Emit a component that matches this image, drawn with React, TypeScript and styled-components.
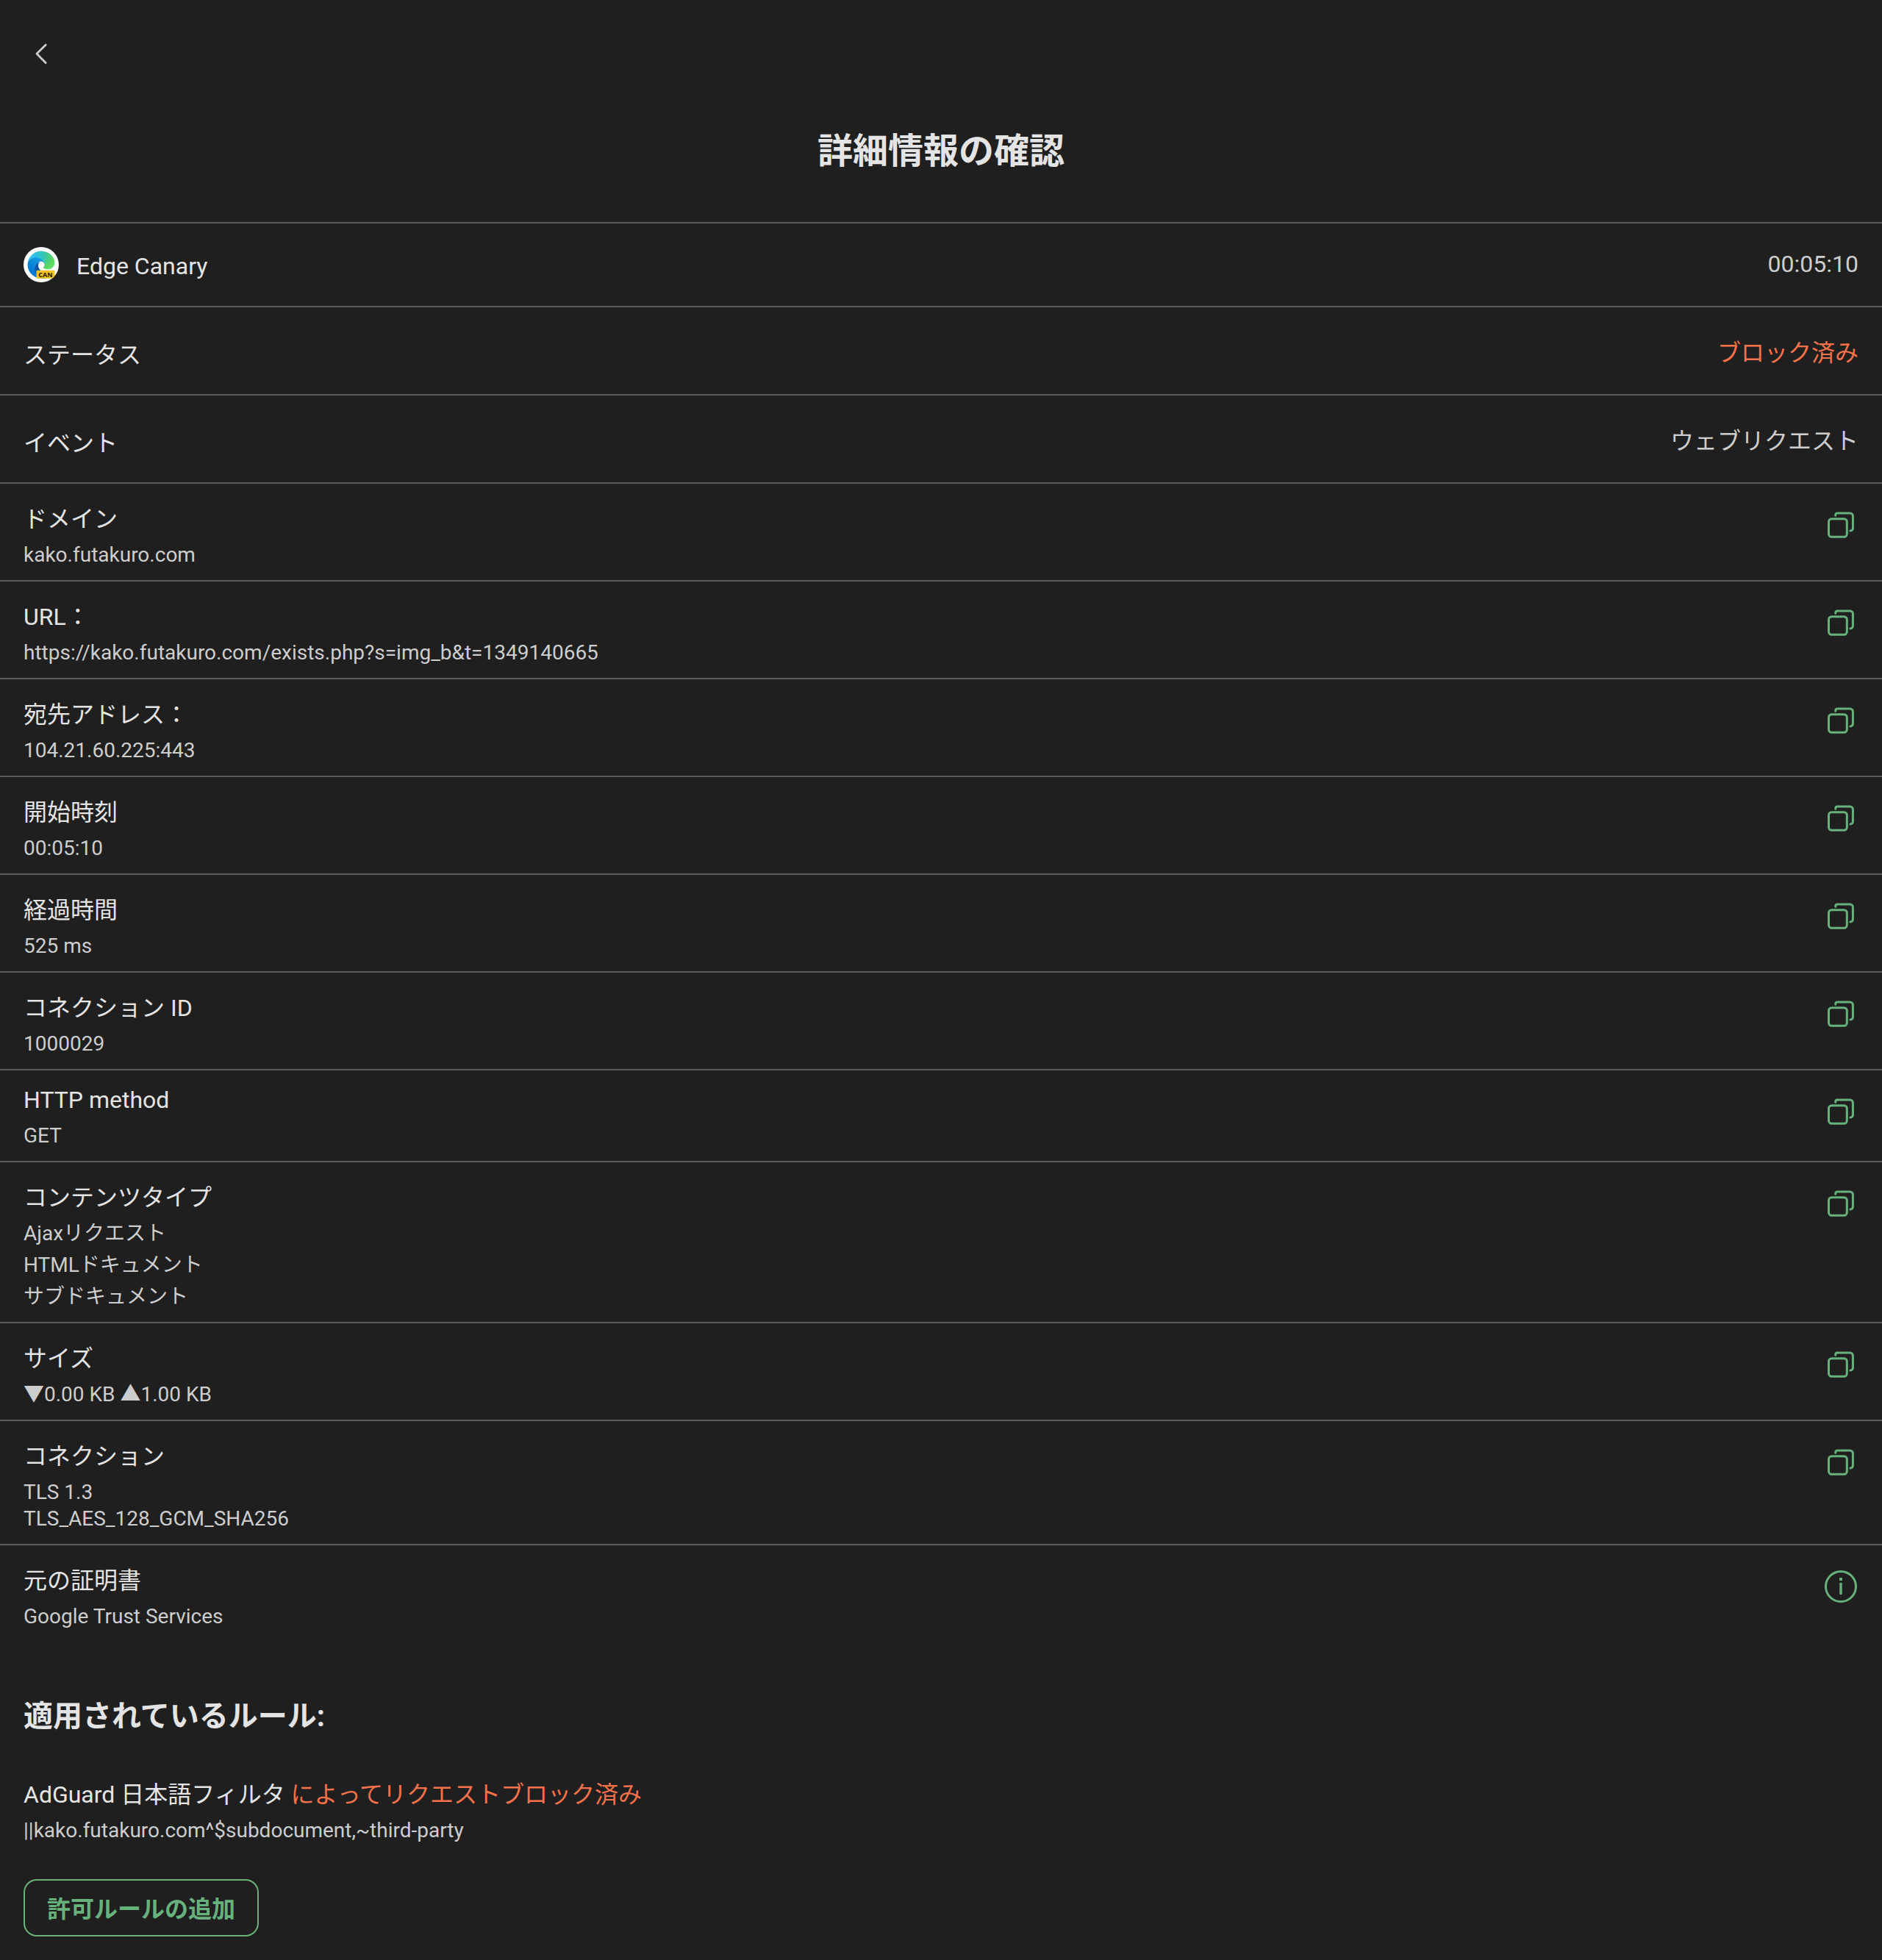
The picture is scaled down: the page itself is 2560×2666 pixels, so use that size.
import React from 'react';
import styled, { createGlobalStyle } from 'styled-components';

const color = {
  page: '#1f1f1f',
  line: '#5b5b5b',
  text: '#e4e4e4',
  soft: '#cdcdcd',
  green: '#67b27c',
  orange: '#f4714a',
};

const GlobalStyle = createGlobalStyle`
  * { box-sizing: border-box; }
  body {
    margin: 0;
    background: ${color.page};
    color: ${color.text};
    font-family: Roboto, 'Noto Sans CJK JP', sans-serif;
  }
`;

const Screen = styled.main`
  padding-bottom: 32px;
`;

const Toolbar = styled.nav`
  display: flex;
  padding: 49px 32px;
`;

const IconButton = styled.button`
  display: flex;
  flex: none;
  width: 48px;
  height: 48px;
  padding: 0;
  border: 0;
  background: none;
  color: ${color.green};
  cursor: pointer;
`;

const BackButton = styled(IconButton)`
  color: ${color.soft};
`;

const Title = styled.h1`
  margin: 0;
  padding: 28px 32px 64px;
  font-size: 48px;
  line-height: 64px;
  font-weight: 700;
  text-align: center;
`;

const Row = styled.div`
  display: flex;
  justify-content: space-between;
  border-top: 2px solid ${color.line};
`;

const SummaryRow = styled(Row)<{ $tall?: boolean }>`
  align-items: center;
  gap: 24px;
  min-height: ${(p) => (p.$tall ? 120 : 114)}px;
  padding: 0 32px;
`;

const DetailRow = styled(Row)`
  align-items: flex-start;
  padding: 21px 32px 16px;
`;

/* Japanese lines carry a little more room above than Latin ones. */
const Label = styled.div<{ $cjk?: boolean }>`
  padding-top: ${(p) => (p.$cjk ? 8 : 0)}px;
  font-size: 32px;
  line-height: 39px;
`;

const SummaryLabel = styled(Label)`
  flex: 1;
  margin-top: 5px;
`;

const SummaryValue = styled(Label)<{ $blocked?: boolean }>`
  margin-bottom: 2px;
  color: ${(p) => (p.$blocked ? color.orange : color.soft)};
`;

const Values = styled.div<{ $cjk?: boolean }>`
  display: flex;
  flex-direction: column;
  gap: ${(p) => (p.$cjk ? 7 : 0)}px;
  margin-top: 11px;
  color: ${color.soft};
  font-size: 28px;
  line-height: 36px;
`;

const Action = styled(IconButton)`
  margin-top: 11px;
`;

const Rules = styled.section`
  padding: 78px 32px 0;
`;

const Heading = styled.h2`
  margin: 0 0 55px;
  font-size: 40px;
  line-height: 48px;
  font-weight: 700;
`;

const Blocked = styled.span`
  color: ${color.orange};
`;

const AddButton = styled.button`
  margin-top: 48px;
  padding: 19px 30px 15px;
  border: 2px solid ${color.green};
  border-radius: 18px;
  background: none;
  color: ${color.green};
  font: 700 32px/40px Roboto, 'Noto Sans CJK JP', sans-serif;
  cursor: pointer;
`;

const BackIcon = () => (
  <svg width="48" height="48" viewBox="0 0 48 48" fill="none" stroke="currentColor" strokeWidth="2.8" strokeLinecap="round" strokeLinejoin="round" aria-hidden="true">
    <path d="M30.2 12L18 24l12.2 12.4" />
  </svg>
);

const CopyIcon = () => (
  <svg width="48" height="48" viewBox="0 0 48 48" fill="none" stroke="currentColor" strokeWidth="3" strokeLinecap="round" strokeLinejoin="round" aria-hidden="true">
    <rect x="7.5" y="15.7" width="24.8" height="24.6" rx="4" />
    <path d="M16.8 11.2V10.6a2.6 2.6 0 0 1 2.6-2.6H36.4a4 4 0 0 1 4 4V28.4a3.5 3.5 0 0 1-3.5 3.5" />
  </svg>
);

const InfoIcon = () => (
  <svg width="48" height="48" viewBox="0 0 48 48" fill="none" stroke="currentColor" strokeWidth="3" aria-hidden="true">
    <circle cx="24" cy="24" r="20.5" />
    <path d="M24 20.2V33.5" strokeWidth="3.4" strokeLinecap="round" />
    <rect x="22" y="12" width="4" height="4" rx="0.6" fill="currentColor" stroke="none" />
  </svg>
);

const EdgeCanaryIcon = () => (
  <svg width="48" height="48" viewBox="0 0 48 48" aria-hidden="true">
    <defs>
      <linearGradient id="deep" x1="63" y1="177" x2="241" y2="177" gradientUnits="userSpaceOnUse">
        <stop offset="0" stopColor="#0c59a4" />
        <stop offset="1" stopColor="#114a8b" />
      </linearGradient>
      <linearGradient id="blue" x1="150" y1="90" x2="45" y2="225" gradientUnits="userSpaceOnUse">
        <stop offset="0" stopColor="#1b9de2" />
        <stop offset="0.2" stopColor="#1595df" />
        <stop offset="0.7" stopColor="#0680d7" />
        <stop offset="1" stopColor="#0078d4" />
      </linearGradient>
      <radialGradient id="sea" cx="0" cy="0" r="1" gradientUnits="userSpaceOnUse" gradientTransform="matrix(0 202 -300 0 26 47)">
        <stop offset="0" stopColor="#35c1f1" />
        <stop offset="0.2" stopColor="#2cc0e0" />
        <stop offset="0.45" stopColor="#36c7b0" />
        <stop offset="0.7" stopColor="#5ad65f" />
        <stop offset="1" stopColor="#66eb6e" />
      </radialGradient>
      <clipPath id="disc">
        <circle cx="24" cy="24" r="24" />
      </clipPath>
    </defs>
    <circle cx="24" cy="24" r="24" fill="#fff" />
    <g transform="translate(5.5 5.6) scale(0.144)">
      <path fill="url(#deep)" d="M235.68 195.46a93.73 93.73 0 0 1-10.54 4.71 101.87 101.87 0 0 1-35.9 6.46c-47.32 0-88.54-32.55-88.54-74.32A31.48 31.48 0 0 1 117.13 105c-42.8 1.8-53.8 46.4-53.8 72.53 0 73.88 68.09 81.37 82.76 81.37 7.91 0 19.84-2.3 27-4.56l1.31-.44a128.34 128.34 0 0 0 66.6-52.8 4 4 0 0 0-5.32-5.64Z" />
      <path fill="url(#blue)" d="M105.73 241.42A79.2 79.2 0 0 1 83 220.08a80.72 80.72 0 0 1 29.5-120c3.12-1.47 8.45-4.13 15.54-4a32.35 32.35 0 0 1 25.69 13 31.88 31.88 0 0 1 6.36 18.66c0-.21 24.46-79.6-80-79.6-43.9 0-80 41.66-80 78.21a130.15 130.15 0 0 0 12.11 56 128 128 0 0 0 156.38 67.11 75.55 75.55 0 0 1-62.78-8Z" />
      <path fill="url(#sea)" d="M152.33 148.86c-.81 1.05-3.3 2.5-3.3 5.66 0 2.61 1.7 5.12 4.72 7.23 14.38 10 41.49 8.68 41.56 8.68a59.56 59.56 0 0 0 30.27-8.35A61.38 61.38 0 0 0 256 109.2c.26-22.41-8-37.31-11.34-43.91C223.46 23.84 177.72 0 128 0A128 128 0 0 0 0 126.2c.48-36.54 36.8-66.05 80-66.05 3.5 0 23.46.34 42 10.07 16.34 8.58 24.9 18.94 30.85 29.21 6.18 10.67 7.28 24.15 7.28 29.52s-2.74 13.33-7.8 19.91Z" />
    </g>
    <g clipPath="url(#disc)">
      <rect x="17.5" y="31.8" width="25" height="11" rx="1" fill="#f3c31c" />
    </g>
    <text x="30" y="40.6" textAnchor="middle" fontFamily="'Open Sans', sans-serif" fontWeight="700" fontSize="9" fill="#17130a">CAN</text>
  </svg>
);

type Detail = {
  label: string;
  values: string[];
  latinLabel?: boolean;
  cjkValues?: boolean;
  info?: boolean;
};

const details: Detail[] = [
  { label: 'ドメイン', values: ['kako.futakuro.com'] },
  { label: 'URL：', values: ['https://kako.futakuro.com/exists.php?s=img_b&t=1349140665'] },
  { label: '宛先アドレス：', values: ['104.21.60.225:443'] },
  { label: '開始時刻', values: ['00:05:10'] },
  { label: '経過時間', values: ['525 ms'] },
  { label: 'コネクション ID', values: ['1000029'] },
  { label: 'HTTP method', values: ['GET'], latinLabel: true },
  { label: 'コンテンツタイプ', values: ['Ajaxリクエスト', 'HTMLドキュメント', 'サブドキュメント'], cjkValues: true },
  { label: 'サイズ', values: ['▼0.00 KB ▲1.00 KB'] },
  { label: 'コネクション', values: ['TLS 1.3', 'TLS_AES_128_GCM_SHA256'] },
  { label: '元の証明書', values: ['Google Trust Services'], info: true },
];

export default function App() {
  return (
    <Screen lang="ja">
      <GlobalStyle />
      <Toolbar>
        <BackButton type="button" aria-label="戻る">
          <BackIcon />
        </BackButton>
      </Toolbar>
      <Title>詳細情報の確認</Title>

      <SummaryRow>
        <EdgeCanaryIcon />
        <SummaryLabel>Edge Canary</SummaryLabel>
        <SummaryValue>00:05:10</SummaryValue>
      </SummaryRow>
      <SummaryRow $tall>
        <SummaryLabel $cjk>ステータス</SummaryLabel>
        <SummaryValue $cjk $blocked>ブロック済み</SummaryValue>
      </SummaryRow>
      <SummaryRow $tall>
        <SummaryLabel $cjk>イベント</SummaryLabel>
        <SummaryValue $cjk>ウェブリクエスト</SummaryValue>
      </SummaryRow>

      {details.map((d) => (
        <DetailRow key={d.label}>
          <div>
            <Label $cjk={!d.latinLabel}>{d.label}</Label>
            <Values $cjk={d.cjkValues}>
              {d.values.map((v) => (
                <div key={v}>{v}</div>
              ))}
            </Values>
          </div>
          <Action type="button" aria-label={d.info ? '証明書の詳細' : 'コピー'}>
            {d.info ? <InfoIcon /> : <CopyIcon />}
          </Action>
        </DetailRow>
      ))}

      <Rules>
        <Heading>適用されているルール:</Heading>
        <Label $cjk>
          AdGuard 日本語フィルタ <Blocked>によってリクエストブロック済み</Blocked>
        </Label>
        <Values>
          <div>||kako.futakuro.com^$subdocument,~third-party</div>
        </Values>
        <AddButton type="button">許可ルールの追加</AddButton>
      </Rules>
    </Screen>
  );
}
